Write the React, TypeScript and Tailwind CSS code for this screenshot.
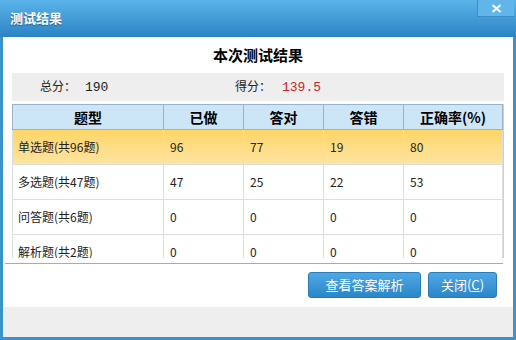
const rows = [
  { name: "单选题(共96题)", done: "96", right: "77", wrong: "19", rate: "80" },
  { name: "多选题(共47题)", done: "47", right: "25", wrong: "22", rate: "53" },
  { name: "问答题(共6题)", done: "0", right: "0", wrong: "0", rate: "0" },
  { name: "解析题(共2题)", done: "0", right: "0", wrong: "0", rate: "0" },
]

const headers = ["题型", "已做", "答对", "答错", "正确率(%)"]

export default function App() {
  return (
    <div className="w-[516px] h-[340px] flex flex-col bg-[#3a92cf] font-['Noto_Sans_CJK_SC',sans-serif]">
      {/* title bar */}
      <div className="h-[37px] flex justify-between items-start bg-gradient-to-b from-[#5ab4ea] to-[#2c83c3]">
        <div className="pl-[10px] pt-[9px] text-[13px] leading-[18px] font-bold text-white [text-shadow:0_1px_1px_rgba(0,0,0,0.35)]">
          测试结果
        </div>
        <div className="w-[37px] h-[17px] mr-[2px] flex items-center justify-center border-l border-b border-[#3a8ccb] bg-[#62b5e8]">
          <svg width="11" height="9" viewBox="0 0 11 9">
            <path d="M1.5 1 L9.5 8 M9.5 1 L1.5 8" stroke="white" strokeWidth="2.2" />
          </svg>
        </div>
      </div>

      <div className="flex-1 flex flex-col px-[3px] pb-[3px]">
        <div className="h-[270px] bg-white flex flex-col">
          <div className="pt-[8px] text-center text-[15px] leading-[20px] font-bold text-black">本次测试结果</div>

          <div className="mt-[8px] mx-[9px] h-[28px] bg-[#eeeeee] flex items-center text-[12px] text-[#222]">
            <div className="pl-[28px] w-[223px]">
              总分：<span className="ml-[9px] font-['Liberation_Mono',monospace] text-[13px]">190</span>
            </div>
            <div>
              得分：<span className="ml-[11px] font-['Liberation_Mono',monospace] text-[13px] text-[#d42020]">139.5</span>
            </div>
          </div>

          {/* table, last row is cut by the scroll area */}
          <div className="mt-[3px] mx-[9px] h-[154px] overflow-hidden border-r border-[#cfcfcf]">
            <div className="grid grid-cols-[150px_80px_80px_80px_1fr] h-[26px] bg-[#cce6f8] border border-[#9ab3c9]">
              {headers.map((h, i) => (
                <div
                  key={h}
                  className={`flex items-center justify-center text-[14px] font-bold text-black ${i > 0 ? "border-l border-[#9ab3c9]" : ""}`}
                >
                  {h}
                </div>
              ))}
            </div>
            {rows.map((r, idx) => (
              <div
                key={r.name}
                className={`grid grid-cols-[150px_80px_80px_80px_1fr] h-[35px] border-b border-x border-[#dedede] text-[12px] text-[#222] ${
                  idx === 0 ? "bg-gradient-to-b from-[#fdd565] to-[#ffe4a0]" : "bg-white"
                }`}
              >
                <div className="flex items-center pl-[5px]">{r.name}</div>
                <div className="flex items-center pl-[6px] border-l border-[#dedede]">{r.done}</div>
                <div className="flex items-center pl-[6px] border-l border-[#dedede]">{r.right}</div>
                <div className="flex items-center pl-[6px] border-l border-[#dedede]">{r.wrong}</div>
                <div className="flex items-center pl-[6px] border-l border-[#dedede]">{r.rate}</div>
              </div>
            ))}
          </div>

          <div className="mt-[5px] ml-[2px] mr-[10px] border-t border-[#a3adb7]" />

          <div className="mt-[8px] pr-[16px] flex justify-end gap-[7px]">
            <button className="w-[113px] h-[26px] rounded-[3px] border border-[#2a7bb8] bg-gradient-to-b from-[#4ea8e5] to-[#2a86c9] text-white text-[13px]">
              查看答案解析
            </button>
            <button className="w-[69px] h-[26px] rounded-[3px] border border-[#2a7bb8] bg-gradient-to-b from-[#4ea8e5] to-[#2a86c9] text-white text-[13px]">
              关闭(<span className="underline">C</span>)
            </button>
          </div>
        </div>
        <div className="flex-1 bg-[#eeeeee]" />
      </div>
    </div>
  )
}
